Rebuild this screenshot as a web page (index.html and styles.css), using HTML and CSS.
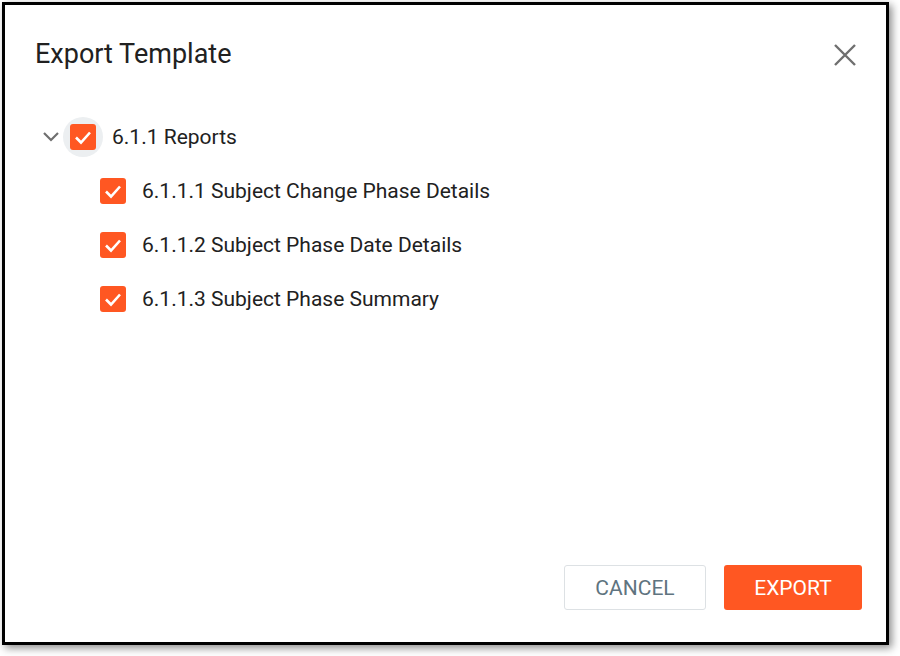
FILE: index.html
```html
<!DOCTYPE html>
<html>
<head>
<meta charset="utf-8">
<link rel="stylesheet" href="styles.css">
</head>
<body>
<div class="dialog">
  <div class="header">
    <h1 class="title">Export Template</h1>
    <button class="close" aria-label="Close">
      <svg width="22" height="22" viewBox="0 0 22 22"><path d="M1 1 L21 21 M21 1 L1 21" stroke="#6f6f6f" stroke-width="2.4" fill="none"/></svg>
    </button>
  </div>
  <div class="tree">
    <div class="row parent">
      <svg class="chev" width="18" height="12" viewBox="0 0 18 12"><path d="M2 2 L9 9 L16 2" stroke="#6f6f6f" stroke-width="2.2" fill="none"/></svg>
      <span class="halo"><span class="cb"><svg width="26" height="26" viewBox="0 0 26 26"><path d="M6 13.5 L11 18.5 L20 8.5" stroke="#fff" stroke-width="2.6" fill="none"/></svg></span></span>
      <span class="label">6.1.1 Reports</span>
    </div>
    <div class="children">
      <div class="row child">
        <span class="cb"><svg width="26" height="26" viewBox="0 0 26 26"><path d="M6 13.5 L11 18.5 L20 8.5" stroke="#fff" stroke-width="2.6" fill="none"/></svg></span>
        <span class="label">6.1.1.1 Subject Change Phase Details</span>
      </div>
      <div class="row child">
        <span class="cb"><svg width="26" height="26" viewBox="0 0 26 26"><path d="M6 13.5 L11 18.5 L20 8.5" stroke="#fff" stroke-width="2.6" fill="none"/></svg></span>
        <span class="label">6.1.1.2 Subject Phase Date Details</span>
      </div>
      <div class="row child">
        <span class="cb"><svg width="26" height="26" viewBox="0 0 26 26"><path d="M6 13.5 L11 18.5 L20 8.5" stroke="#fff" stroke-width="2.6" fill="none"/></svg></span>
        <span class="label">6.1.1.3 Subject Phase Summary</span>
      </div>
    </div>
  </div>
  <div class="footer">
    <button class="btn cancel">CANCEL</button>
    <button class="btn export">EXPORT</button>
  </div>
</div>
</body>
</html>
```
FILE: styles.css
```css
html, body {
  margin: 0;
  padding: 0;
  background: #fff;
}
body {
  width: 900px;
  height: 656px;
  overflow: hidden;
  font-family: Roboto, "Liberation Sans", sans-serif;
  color: #212121;
}
.dialog {
  box-sizing: border-box;
  margin: 2px 0 0 2px;
  width: 887px;
  height: 643px;
  border: 3px solid #000;
  background: #fff;
  box-shadow: 3px 3px 8px rgba(0,0,0,0.45);
  display: flex;
  flex-direction: column;
  padding: 0 24px 0 30px;
}
.header {
  display: flex;
  align-items: center;
  justify-content: space-between;
  height: 101px;
}
.title {
  margin: 0;
  font-size: 27px;
  font-weight: 400;
  line-height: 32px;
  color: #212121;
  padding-bottom: 4px;
}
.close {
  border: 0;
  background: none;
  padding: 0 0 2px 0;
  margin-right: 6px;
  display: flex;
}
.tree {
  flex: 1;
}
.row {
  display: flex;
  align-items: center;
}
.parent {
  height: 40px;
  margin-top: 11px;
}
.chev {
  margin-left: 7px;
  margin-right: 3px;
}
.halo {
  width: 40px;
  height: 40px;
  border-radius: 50%;
  background: #eceff1;
  display: flex;
  align-items: center;
  justify-content: center;
}
.cb {
  width: 26px;
  height: 26px;
  border-radius: 3px;
  background: #ff5722;
  display: flex;
}
.parent .label {
  margin-left: 9px;
}
.label {
  font-size: 21px;
  line-height: 26px;
}
.children {
  padding-left: 65px;
  padding-top: 21px;
}
.child {
  height: 26px;
  margin-bottom: 28px;
}
.child .label {
  margin-left: 16px;
}
.footer {
  display: flex;
  justify-content: flex-end;
  gap: 18px;
  padding-bottom: 32px;
}
.btn {
  font-family: Roboto, "Liberation Sans", sans-serif;
  font-size: 21px;
  height: 45px;
  border-radius: 3px;
  cursor: pointer;
}
.cancel {
  width: 142px;
  background: #fff;
  border: 1px solid #dde1e4;
  color: #5f7480;
}
.export {
  width: 138px;
  background: #ff5722;
  border: 0;
  color: #fff;
}
```
